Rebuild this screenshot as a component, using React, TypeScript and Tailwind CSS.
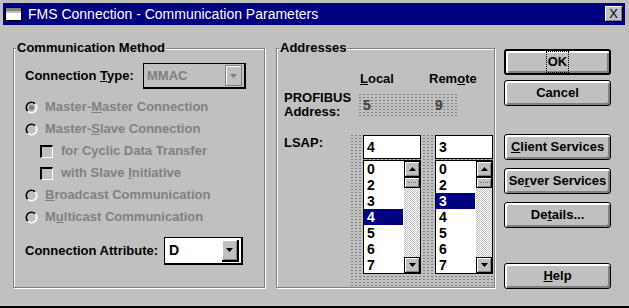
import clsx from "clsx";

const bevel = "shadow-[inset_1px_1px_0_#fff,inset_2px_2px_0_#fff,inset_-1px_-1px_0_#808080,inset_-2px_-2px_0_#808080]";
const stipple = "bg-[radial-gradient(circle,#808080_0.7px,transparent_0.9px)] bg-[length:4px_3px]";

function Btn({ children, def = false, className }: { children: React.ReactNode; def?: boolean; className?: string }) {
  return (
    <div
      className={clsx(
        "flex items-center justify-center h-[26px] w-[107px] bg-[#c0c0c0] text-black font-bold text-[13px] rounded-[3px] border-black",
        def ? "border-2" : "border",
        bevel,
        className
      )}
    >
      {children}
    </div>
  );
}

function Radio({ on = false }: { on?: boolean }) {
  return (
    <svg width="13" height="13" viewBox="0 0 13 13" className="shrink-0">
      <circle cx="6.5" cy="6.5" r="5.2" fill="#c0c0c0" />
      <path d="M2.8 10.2A5.2 5.2 0 0 1 10.2 2.8" fill="none" stroke="#000" strokeWidth="1.6" />
      <path d="M10.2 2.8A5.2 5.2 0 0 1 2.8 10.2" fill="none" stroke="#fff" strokeWidth="1.6" />
      {on && <circle cx="6.5" cy="6.5" r="2.6" fill="#808080" />}
    </svg>
  );
}

function Check() {
  return <div className="w-[13px] h-[13px] shrink-0 border-l-2 border-t-2 border-black border-r border-b border-r-white border-b-white bg-[#c0c0c0]" />;
}

function Arrow({ down = true, color = "#000" }: { down?: boolean; color?: string }) {
  return (
    <svg width="7" height="4" viewBox="0 0 7 4">
      <path d={down ? "M0 0h7L3.5 4z" : "M3.5 0L7 4H0z"} fill={color} />
    </svg>
  );
}

function ScrollBtn({ down = false }: { down?: boolean }) {
  return (
    <div className="w-[16px] h-[16px] bg-[#c0c0c0] border border-black flex items-center justify-center shadow-[inset_1px_1px_0_#fff,inset_-1px_-1px_0_#808080]">
      <Arrow down={down} />
    </div>
  );
}

function List({ items, sel }: { items: string[]; sel: string }) {
  return (
    <div className="flex h-[114px] w-[58px] border border-black bg-white">
      <div className="flex-1 flex flex-col">
        {items.map((i) => (
          <div key={i} className={clsx("h-[16px] leading-[16px] pl-[3px] text-[14px]", i === sel ? "bg-[#000080] text-white" : "text-black")}>
            {i}
          </div>
        ))}
      </div>
      <div className="w-[17px] flex flex-col items-end">
        <ScrollBtn />
        <div className="w-[16px] h-[11px] border border-black bg-[#c0c0c0] shadow-[inset_1px_1px_0_#fff,inset_-1px_-1px_0_#808080] flex items-center justify-center">
          <div className="w-[8px] border-t border-dotted border-[#808080]" />
        </div>
        <div className="flex-1 w-[16px] bg-[conic-gradient(#fff_25%,#c0c0c0_0_50%,#fff_0_75%,#c0c0c0_0)] bg-[length:2px_2px]" />
        <ScrollBtn down />
      </div>
    </div>
  );
}

function Group({ title, className, children }: { title: string; className?: string; children: React.ReactNode }) {
  return (
    <div className={clsx("relative border border-[#808080] shadow-[inset_1px_1px_0_#fff,1px_1px_0_#fff]", className)}>
      <div className="absolute left-[2px] -top-[9px] bg-[#c0c0c0] px-px text-[13px] font-bold leading-[16px] text-black">{title}</div>
      {children}
    </div>
  );
}

export default function App() {
  const items = ["0", "2", "3", "4", "5", "6", "7"];
  return (
    <div className="w-[629px] h-[308px] bg-[#c0c0c0] flex flex-col pt-[3px] pl-[3px] pr-[4px] border-b-2 border-black font-['Liberation_Sans',Arial,sans-serif] select-none overflow-hidden">
      <div className="h-[22px] bg-[#000080] flex items-center shrink-0">
        <div className="ml-[2px] w-[17px] h-[14px] border border-black bg-white flex flex-col">
          <div className="h-[3px] bg-[#808080]" />
          <div className="h-[2px] bg-[#c0c0c0]" />
        </div>
        <div className="ml-[6px] text-white text-[14px] leading-[22px]">FMS Connection - Communication Parameters</div>
        <div className="ml-auto mr-[2px] w-[18px] h-[16px] bg-[#c0c0c0] border-r border-b border-black shadow-[inset_1px_1px_0_#fff,inset_-1px_-1px_0_#808080] flex items-center justify-center text-[13px] leading-none text-black">
          X
        </div>
      </div>

      <div className="flex pt-[23px] pl-[10px] text-[13px] font-bold">
        <Group title="Communication Method" className="w-[252px] h-[240px] shrink-0">
          <div className="flex flex-col pt-[14px] pl-[11px]">
            <div className="flex items-center h-[26px]">
              <div className="w-[118px] text-black">
                Connection <span className="underline">T</span>ype:
              </div>
              <div className="w-[103px] h-[26px] border border-black border-r-2 border-b-2 flex items-center bg-[#c0c0c0]">
                <div className="flex-1 pl-[3px] text-[#808080] text-[13px]">MMAC</div>
                <div className="w-[17px] h-[21px] mr-[2px] bg-[#c0c0c0] border border-[#808080] shadow-[inset_1px_1px_0_#fff] flex items-center justify-center">
                  <Arrow color="#808080" />
                </div>
              </div>
            </div>
            <div className="mt-[7px] flex flex-col text-[#808080]">
              <div className="h-[22px] flex items-center gap-[7px]">
                <Radio on />
                <span>
                  Master-<span className="underline">M</span>aster Connection
                </span>
              </div>
              <div className="h-[22px] flex items-center gap-[7px]">
                <Radio />
                <span>
                  Master-<span className="underline">S</span>lave Connection
                </span>
              </div>
              <div className="h-[22px] flex items-center gap-[8px] pl-[15px]">
                <Check />
                <span>for Cyclic Data Transfer</span>
              </div>
              <div className="h-[22px] flex items-center gap-[8px] pl-[15px]">
                <Check />
                <span>
                  with Slave <span className="underline">I</span>nitiative
                </span>
              </div>
              <div className="h-[22px] flex items-center gap-[7px]">
                <Radio />
                <span>
                  <span className="underline">B</span>roadcast Communication
                </span>
              </div>
              <div className="h-[22px] flex items-center gap-[7px]">
                <Radio />
                <span>
                  M<span className="underline">u</span>lticast Communication
                </span>
              </div>
            </div>
            <div className="mt-[9px] flex items-center h-[28px]">
              <div className="w-[139px] text-black">Connection Attribute:</div>
              <div className="w-[79px] h-[28px] border border-black border-r-2 border-b-2 bg-white flex items-center">
                <div className="flex-1 pl-[4px] text-black text-[14px]">D</div>
                <div className="w-[17px] h-[22px] mr-[2px] bg-[#c0c0c0] border-r-2 border-b-2 border-black shadow-[inset_1px_1px_0_#fff,inset_-1px_-1px_0_#808080] flex items-center justify-center">
                  <Arrow />
                </div>
              </div>
            </div>
          </div>
        </Group>

        <Group title="Addresses" className="ml-[11px] w-[219px] h-[240px] shrink-0">
          <div className="flex flex-col pt-[22px] text-black">
            <div className="flex h-[15px] leading-[15px]">
              <div className="ml-[83px] w-[69px]">
                <span className="underline">L</span>ocal
              </div>
              <div>
                Rem<span className="underline">o</span>te
              </div>
            </div>
            <div className="mt-[5px] flex">
              <div className="pl-[7px] w-[81px] leading-[14px]">
                <div>PROFIBUS</div>
                <div>Address:</div>
              </div>
              <div className={clsx("mt-[2px] w-[100px] h-[24px] flex items-center text-[#404040] text-[14px]", stipple)}>
                <span className="ml-[5px] w-[72px]">5</span>
                <span>9</span>
              </div>
            </div>
            <div className="mt-[15px] flex">
              <div className="pl-[7px] w-[73px] pt-[2px] leading-[14px]">LSAP:</div>
              <div className={clsx("w-[144px] h-[153px] pl-[13px] pt-[1px] flex gap-[14px]", stipple)}>
                <div className="flex flex-col gap-[1px]">
                  <div className="w-[58px] h-[24px] border border-black bg-white pl-[3px] text-[14px] leading-[22px]">4</div>
                  <List items={items} sel="4" />
                </div>
                <div className="flex flex-col gap-[1px]">
                  <div className="w-[58px] h-[24px] border border-black bg-white pl-[3px] text-[14px] leading-[22px]">3</div>
                  <List items={items} sel="3" />
                </div>
              </div>
            </div>
          </div>
        </Group>

        <div className="ml-[9px] flex flex-col pt-px">
          <Btn def>
            <span className="px-[1px] outline-1 outline-dotted outline-black">OK</span>
          </Btn>
          <Btn className="mt-[5px]">Cancel</Btn>
          <Btn className="mt-[28px]">
            <span>
              <span className="underline">C</span>lient Services
            </span>
          </Btn>
          <Btn className="mt-[8px]">
            <span>
              Se<span className="underline">r</span>ver Services
            </span>
          </Btn>
          <Btn className="mt-[8px]">
            <span>
              De<span className="underline">t</span>ails...
            </span>
          </Btn>
          <Btn className="mt-[35px]">
            <span>
              <span className="underline">H</span>elp
            </span>
          </Btn>
        </div>
      </div>
    </div>
  );
}
